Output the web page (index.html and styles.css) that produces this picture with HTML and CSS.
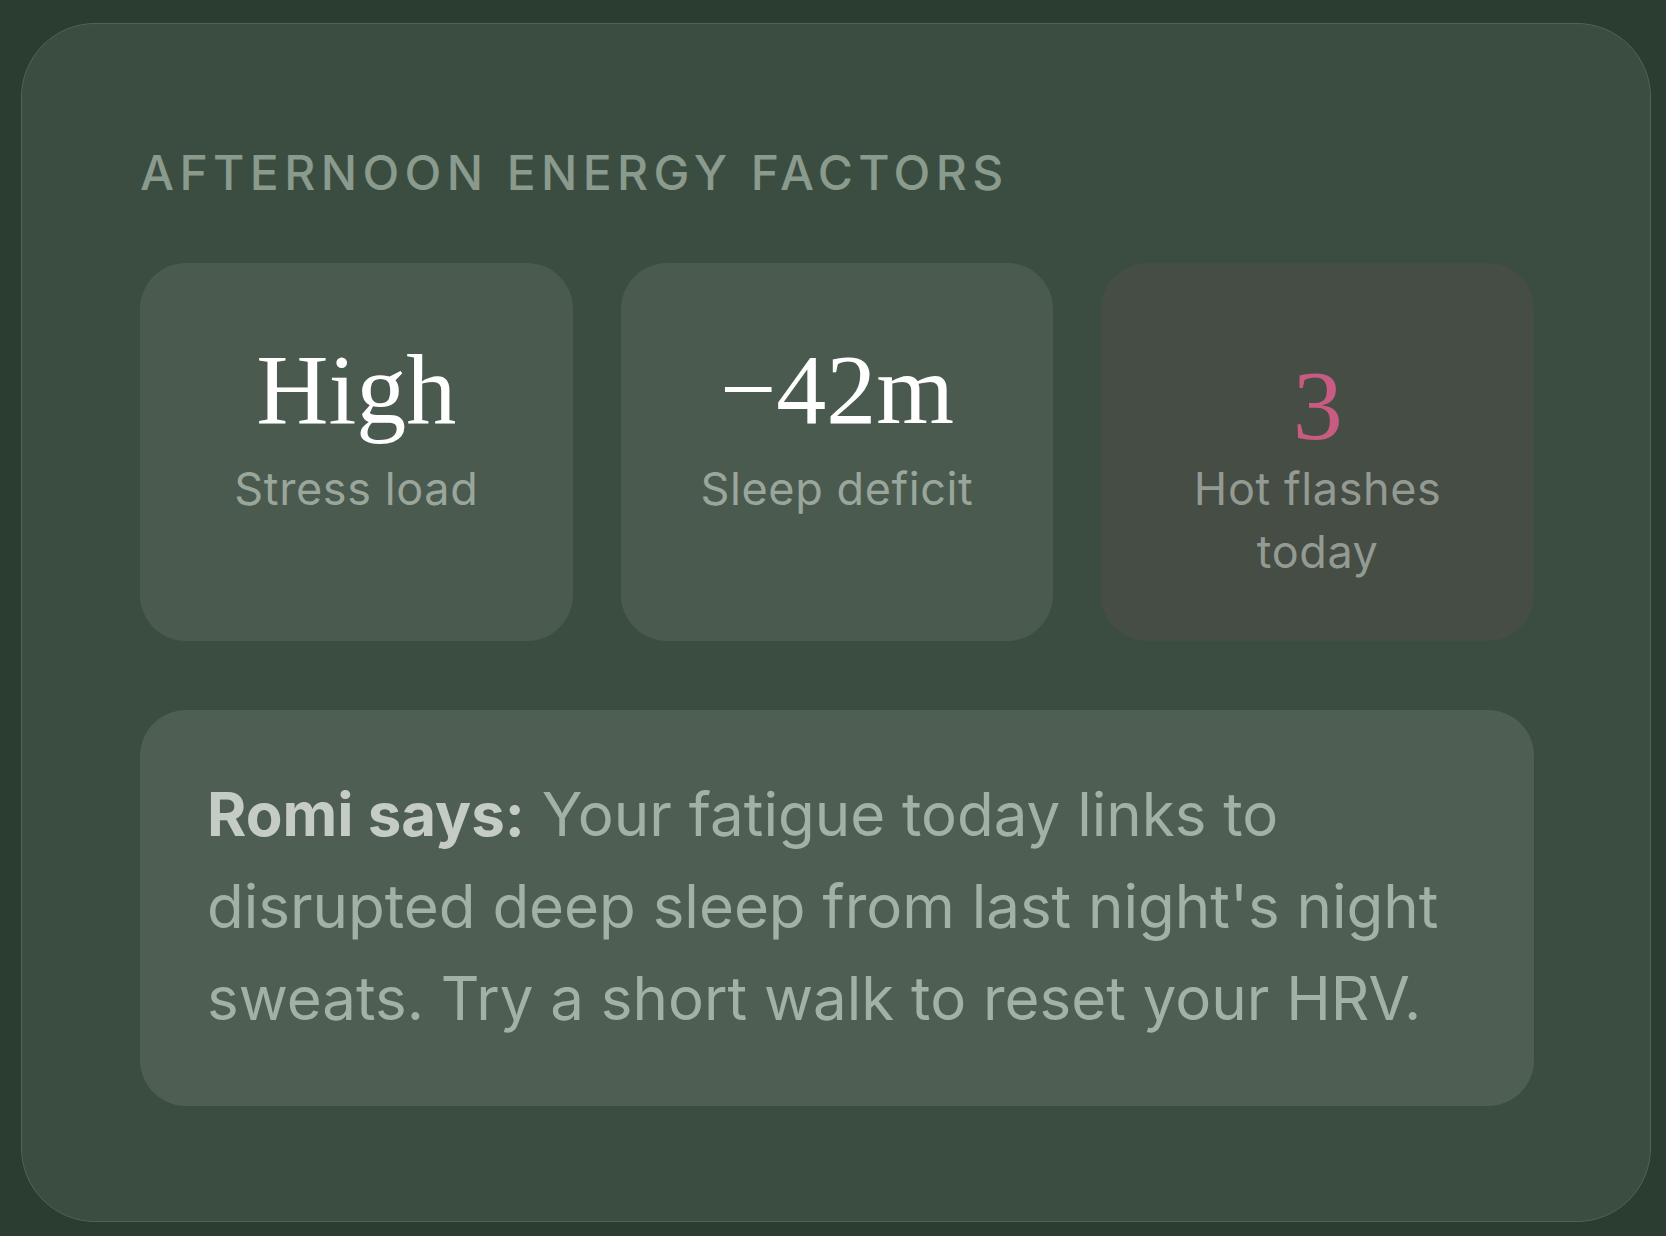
FILE: index.html
```html
<!DOCTYPE html>
<html lang="en">
<head>
<meta charset="utf-8">
<title>Afternoon Energy Factors</title>
<link rel="stylesheet" href="styles.css">
</head>
<body>
  <section class="panel">
    <h2 class="panel-title">Afternoon Energy Factors</h2>
    <div class="stats">
      <div class="stat">
        <div class="stat-value">High</div>
        <div class="stat-label">Stress load</div>
      </div>
      <div class="stat">
        <div class="stat-value">−42m</div>
        <div class="stat-label">Sleep deficit</div>
      </div>
      <div class="stat stat-warm">
        <div class="stat-value stat-value-pink"><span class="oldstyle">3</span></div>
        <div class="stat-label">Hot flashes today</div>
      </div>
    </div>
    <div class="insight">
      <p class="insight-text"><strong>Romi says:</strong> Your fatigue today links to disrupted deep sleep from last night's night sweats. Try a short walk to reset your HRV.</p>
    </div>
  </section>
</body>
</html>
```
FILE: styles.css
```css
* { box-sizing: border-box; }

html, body {
  margin: 0;
  background: #2b3c31;
}

body {
  padding: 23px 15px 15px 21px;
  font-family: "Inter", "Liberation Sans", sans-serif;
}

.panel {
  width: 1630px;
  background: #3b4d41;
  border: 1.5px solid #50625a;
  border-radius: 74px;
  padding: 120px 116px 115px 118px;
}

.panel-title {
  margin: 0 0 61px 0;
  font-size: 48px;
  line-height: 57.6px;
  font-weight: 500;
  letter-spacing: 5.4px;
  text-transform: uppercase;
  color: #8a9a8d;
}

.stats {
  display: grid;
  grid-template-columns: repeat(3, 1fr);
  gap: 48px;
  margin-bottom: 69px;
}

.stat {
  background: #4a5a4f;
  border-radius: 46px;
  padding: 72px 40px 58px;
  text-align: center;
}

.stat-warm {
  background: #454d45;
}

.stat-value {
  font-family: "Liberation Serif", "Times New Roman", serif;
  font-size: 100px;
  line-height: 110px;
  color: #ffffff;
  margin-bottom: 12px;
}

.stat-value-pink {
  color: #c75b82;
}

.oldstyle {
  display: inline-block;
  transform: translateY(16px);
}

.stat-label {
  font-size: 45px;
  line-height: 63px;
  letter-spacing: 0.6px;
  color: #9aa69c;
}

.stat-warm .stat-label {
  color: #939a93;
}

.insight {
  background: #4e5e53;
  border-radius: 46px;
  padding: 58px 64px 62px 67px;
}

.insight-text {
  margin: 0;
  font-size: 60px;
  line-height: 92px;
  color: #a3b0a6;
}

.insight-text strong {
  font-weight: 700;
  color: #c5ccc6;
}
```
